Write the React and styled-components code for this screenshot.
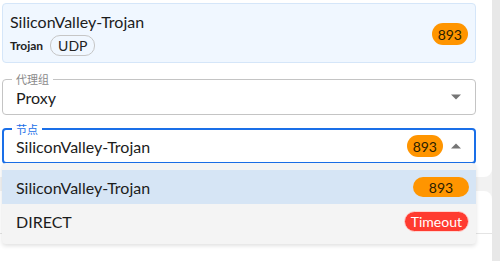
import React from "react";
import styled, { createGlobalStyle } from "styled-components";

const GlobalStyle = createGlobalStyle`
  html, body {
    margin: 0;
    padding: 0;
    background: #f2f2f2;
    font-family: "Lato", "Noto Sans CJK SC", sans-serif;
    color: #1c1c1c;
  }
`;

const Page = styled.div`
  display: flex;
  height: 261px;
  overflow: hidden;
`;

const Content = styled.div`
  flex: 1;
  display: flex;
  flex-direction: column;
  gap: 14px;
  background: #f2f2f2;
`;

const Scrollbar = styled.div`
  width: 8px;
  background: #e8e8e8;
`;

const TopCard = styled.div`
  background: #fff;
  border-radius: 0 0 8px 0;
  padding: 3px 16px 13px 2px;
  display: flex;
  flex-direction: column;
`;

const BottomCard = styled.div`
  flex: 1;
  background: #fff;
  border-radius: 0 8px 0 0;
`;

const CardHeader = styled.div`
  height: 42px;
  border-bottom: 1px solid #e4e4e4;
`;

const InfoBox = styled.div`
  display: flex;
  align-items: center;
  background: #f0f7ff;
  border: 1px solid #d5e6f9;
  border-radius: 4px;
  padding: 8px 7px 6px 7px;
`;

const InfoText = styled.div`
  flex: 1;
  display: flex;
  flex-direction: column;
  gap: 4px;
`;

const Title = styled.div`
  font-size: 16px;
  line-height: 19px;
`;

const MetaRow = styled.div`
  display: flex;
  align-items: center;
  gap: 7px;
`;

const Type = styled.span`
  font-size: 12px;
  font-weight: 700;
  color: #222;
`;

const Chip = styled.span`
  display: inline-flex;
  align-items: center;
  height: 19px;
  padding: 0 7px;
  border: 1px solid #c6c6c6;
  border-radius: 10px;
  font-size: 14px;
  color: #222;
`;

const Badge = styled.span`
  display: inline-flex;
  align-items: center;
  justify-content: center;
  height: ${(p) => p.$h || 22}px;
  min-width: ${(p) => p.$w || 36}px;
  padding: 0 6px;
  box-sizing: border-box;
  border-radius: 11px;
  font-size: 14px;
  background: ${(p) => (p.$error ? "#ff3b30" : "#ff9500")};
  color: ${(p) => (p.$error ? "#fff" : "#2a1e00")};
  border: ${(p) => (p.$error ? "1px solid #ffd6d3" : "none")};
`;

const Field = styled.div`
  position: relative;
  height: 36px;
  margin-top: ${(p) => p.$mt}px;
  box-sizing: border-box;
  border: ${(p) => (p.$focused ? "2px solid #1a6fe8" : "1px solid #c4c4c4")};
  border-radius: 4px;
  display: flex;
  align-items: center;
  gap: 8px;
  padding: 0 ${(p) => (p.$focused ? 12 : 13)}px;
`;

const Legend = styled.span`
  position: absolute;
  top: -8px;
  left: ${(p) => (p.$focused ? 8 : 9)}px;
  padding: 0 4px;
  background: #fff;
  font-family: "Noto Sans CJK SC", sans-serif;
  font-size: 11px;
  line-height: 14px;
  color: ${(p) => (p.$focused ? "#1a6fe8" : "#8a8a8a")};
`;

const Value = styled.span`
  flex: 1;
  font-size: 16px;
`;

const Arrow = styled.svg`
  width: 10px;
  height: 6px;
  fill: #757575;
  margin-right: 1px;
`;

const Menu = styled.div`
  position: absolute;
  top: calc(100% + 1px);
  left: -2px;
  right: -2px;
  padding: 7px 0 6px;
  background: #f4f4f4;
  border-radius: 4px;
  box-shadow: 0 2px 4px rgba(0, 0, 0, 0.12);
  z-index: 2;
`;

const MenuItem = styled.div`
  height: 34px;
  display: flex;
  align-items: center;
  padding: 0 7px 0 14px;
  background: ${(p) => (p.$selected ? "#d6e5f5" : "transparent")};
  font-size: 16px;
`;

const ItemLabel = styled.span`
  flex: 1;
`;

const DropIcon = ({ up }) => (
  <Arrow viewBox="0 0 10 6">
    {up ? <path d="M0 5.5 L5 0.5 L10 5.5 Z" /> : <path d="M0 0.5 L5 5.5 L10 0.5 Z" />}
  </Arrow>
);

const App = () => {
  return (
    <Page>
      <GlobalStyle />
      <Content>
        <TopCard>
          <InfoBox>
            <InfoText>
              <Title>SiliconValley-Trojan</Title>
              <MetaRow>
                <Type>Trojan</Type>
                <Chip>UDP</Chip>
              </MetaRow>
            </InfoText>
            <Badge>893</Badge>
          </InfoBox>

          <Field $mt={16}>
            <Legend>代理组</Legend>
            <Value>Proxy</Value>
            <DropIcon />
          </Field>

          <Field $mt={13} $focused>
            <Legend $focused>节点</Legend>
            <Value>SiliconValley-Trojan</Value>
            <Badge>893</Badge>
            <DropIcon up />
            <Menu>
              <MenuItem $selected>
                <ItemLabel>SiliconValley-Trojan</ItemLabel>
                <Badge $h={20} $w={56}>893</Badge>
              </MenuItem>
              <MenuItem>
                <ItemLabel>DIRECT</ItemLabel>
                <Badge $h={21} $w={63} $error>Timeout</Badge>
              </MenuItem>
            </Menu>
          </Field>
        </TopCard>
        <BottomCard>
          <CardHeader />
        </BottomCard>
      </Content>
      <Scrollbar />
    </Page>
  );
};

export default App;
